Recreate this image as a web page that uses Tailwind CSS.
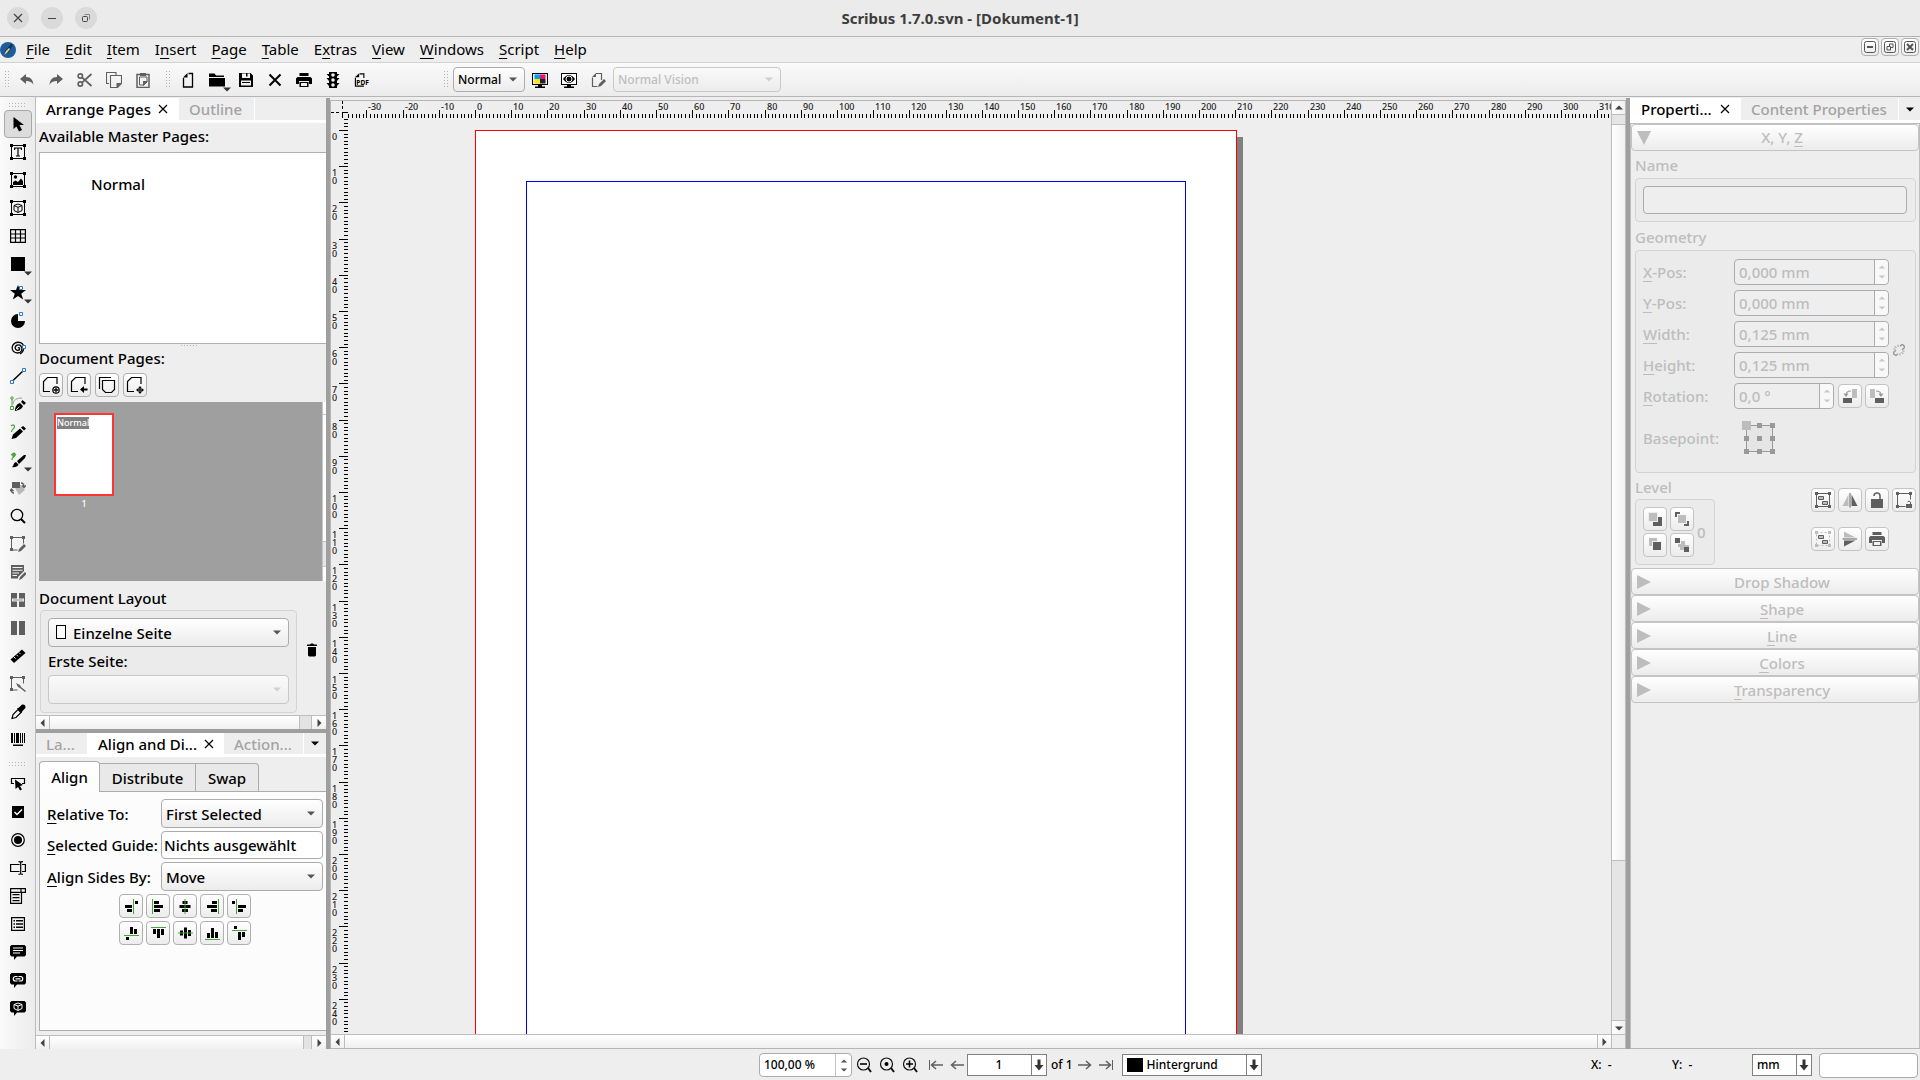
<!DOCTYPE html>
<html lang="en">
<head>
<meta charset="utf-8">
<title>Scribus 1.7.0.svn - [Dokument-1]</title>
<script src="https://cdn.jsdelivr.net/npm/@tailwindcss/browser@4"></script>
</head>
<body class="h-screen overflow-hidden bg-[#eeeeee] font-['Noto_Sans',sans-serif] text-[15px] leading-5 font-medium text-black flex flex-col">

<!-- icon sprite -->
<svg class="hidden" aria-hidden="true">
  <symbol id="caret" viewBox="0 0 8 5"><path d="M0 .5h8L4 4.500z" fill="currentColor"/></symbol>
  <symbol id="caret-up" viewBox="0 0 8 5"><path d="M0 4.500h8L4 .5z" fill="currentColor"/></symbol>
  <symbol id="arr-l" viewBox="0 0 5 8"><path d="M4.500 0v8L.5 4z" fill="currentColor"/></symbol>
  <symbol id="arr-r" viewBox="0 0 5 8"><path d="M.5 0v8L4.500 4z" fill="currentColor"/></symbol>
  <symbol id="x" viewBox="0 0 10 10"><path d="M1 1l8 8M9 1L1 9" stroke="currentColor" stroke-width="1.200" fill="none"/></symbol>
  <symbol id="grip-h" viewBox="0 0 17 5"><path d="M0 0h1v1H0zM3 0h1v1H3zM6 0h1v1H6zM9 0h1v1H9zM12 0h1v1h-1zM15 0h1v1h-1zM0 3h1v1H0zM3 3h1v1H3zM6 3h1v1H6zM9 3h1v1H9zM12 3h1v1h-1zM15 3h1v1h-1z" fill="#b4b4b4"/></symbol>
  <symbol id="grip-v" viewBox="0 0 5 17"><path d="M0 0h1v1H0zM0 3h1v1H0zM0 6h1v1H0zM0 9h1v1H0zM0 12h1v1H0zM0 15h1v1H0zM3 0h1v1H3zM3 3h1v1H3zM3 6h1v1H3zM3 9h1v1H3zM3 12h1v1H3zM3 15h1v1H3z" fill="#b4b4b4"/></symbol>
  <symbol id="down" viewBox="0 0 10 12"><path d="M3.500 0.500h3v5.500H9.500L5 11.500.5 6h3z" fill="#333"/></symbol>
  <!-- main toolbar -->
  <symbol id="undo" viewBox="0 0 16 16"><path d="M1 7l6-5v3c5 0 7 3 7.500 8C13 10 11 9 7 9v3z" fill="#5f5f5f"/></symbol>
  <symbol id="redo" viewBox="0 0 16 16"><path d="M15 7L9 2v3C4 5 2 8 1.500 13 3 10 5 9 9 9v3z" fill="#5f5f5f"/></symbol>
  <symbol id="cut" viewBox="0 0 16 16"><g fill="none" stroke="#5f5f5f" stroke-width="1.700"><circle cx="3.300" cy="4" r="2.200"/><circle cx="3.300" cy="12" r="2.200"/><path d="M5 5.300L14.500 14M5 10.700L14.500 2"/></g></symbol>
  <symbol id="copy" viewBox="0 0 16 16"><g fill="none" stroke="#5f5f5f" stroke-width="1.100"><path d="M3 11.500H.5V.5h9.500V3M4.500 3.500h11v8l-4 4h-7z"/></g><path d="M15.500 11h-5v5z" fill="#5f5f5f"/></symbol>
  <symbol id="paste" viewBox="0 0 16 16"><g fill="none" stroke="#5f5f5f" stroke-width="1.500"><path d="M2 2.500h12v13H2z"/><path d="M4.500 5v8h4.500l3-3V5z" stroke-width="1"/></g><path d="M5 1h6v3H5zM8 14l5-5H8z" fill="#5f5f5f"/></symbol>
  <symbol id="new" viewBox="0 0 16 16"><path d="M3.500 6v9h9V1.500H8.500" fill="none" stroke="#000" stroke-width="1.300"/><path d="M3 5.500L7.500 1v4.500z"/></symbol>
  <symbol id="open" viewBox="0 0 16 16"><path d="M0 1.500h5.500L7 3.500h8v1.500H0zM0 6h16v8.500H0z"/></symbol>
  <symbol id="save" viewBox="0 0 16 16"><path fill-rule="evenodd" d="M1 1h11.500L15 3.500V15H1zM4 1.500v4.500h8V1.500H9.500v3H8v-3zM3 8.500v5h10v-5zM4 10h8v1H4z"/></symbol>
  <symbol id="close" viewBox="0 0 16 16"><path d="M2.500 2.500l11 11M13.500 2.500l-11 11" stroke="#000" stroke-width="2"/></symbol>
  <symbol id="print" viewBox="0 0 16 16"><path fill="currentColor" fill-rule="evenodd" d="M3.500 1h9v3h-9zM1.500 5h13L16 6.500V12h-3V9H3v3H0V6.500zM3.500 10h9v5h-9zM5 11v3h6v-3z"/></symbol>
  <symbol id="traffic" viewBox="0 0 16 16"><path fill-rule="evenodd" d="M4 0h8v2h2.500L12 4.500V6h2.500L12 9v2h2.500L12 14v2H4v-2l-2.500-3H4V9L1.500 6H4V4.500L1.500 2H4zM8 1.200a1.800 1.800 0 100 3.600 1.800 1.800 0 000-3.600zM8 6.200a1.800 1.800 0 100 3.600 1.800 1.800 0 000-3.600zM8 11.200a1.800 1.800 0 100 3.600 1.800 1.800 0 000-3.600z"/></symbol>
  <symbol id="pdf" viewBox="0 0 17 16"><path d="M1.500 15V5.500M1.500 14.500h9M6 1.500h4.500V6" fill="none" stroke="#000" stroke-width="1.200"/><path d="M1 5L5.500.8V5z"/><text x="2.500" y="13" font-size="7" font-weight="700">PDF</text></symbol>
  <symbol id="cmyk" viewBox="0 0 16 16"><path d="M0 1h16v12H0zM3 14.500h10V16H3zM6 13h4v2H6z"/><path d="M1 2h14v10H1z" fill="#eee"/><path d="M2.500 2.500h5.500V7H2.500z" fill="#00a0f0"/><path d="M8 2.500h5.500V7H8z" fill="#e8107c"/><path d="M2.500 7H8v4.500H2.500z" fill="#ffe600"/><path d="M8 7h5.500v4.500H8z" fill="#222"/></symbol>
  <symbol id="preview" viewBox="0 0 16 16"><path d="M0 1h16v12H0zM3 14.500h10V16H3zM6 13h4v2H6z"/><path d="M1 2h14v10H1z" fill="#fff"/><path d="M2 7q6-8 12 0q-6 8-12 0z"/><circle cx="8" cy="7" r="3" fill="none" stroke="#fff"/></symbol>
  <symbol id="editdoc" viewBox="0 0 16 16"><path d="M2.500 5.500v9h5M6 1.500h5.500V8" fill="none" stroke="#5f5f5f" stroke-width="1.200"/><path d="M2 5l4-4v4zM8 15l1-3 5-5 2 2-5 5z" fill="#5f5f5f"/></symbol>
  <!-- tool box -->
  <symbol id="t-select" viewBox="0 0 16 16"><path d="M3.500 1v12l3-2.500L9 15.500l3-1.500-2.500-5H14z"/></symbol>
  <symbol id="frame" viewBox="0 0 16 16"><path d="M1.500 1.500h13v13h-13z" fill="none" stroke="currentColor"/><path d="M0 0h3v3H0zM13 0h3v3h-3zM0 13h3v3H0zM13 13h3v3h-3z" fill="currentColor"/></symbol>
  <symbol id="t-text" viewBox="0 0 16 16"><use href="#frame"/><path d="M4 3.500h8v2.500h-1L10.500 4.500H8.600v7H10v1H6v-1h1.400v-7H5.500L5 6H4z"/></symbol>
  <symbol id="t-image" viewBox="0 0 16 16"><use href="#frame"/><circle cx="5.500" cy="5" r="1.700"/><path d="M3 13V10l2.500-1.500L8 10l3-3.500L13 9v4z"/></symbol>
  <symbol id="t-render" viewBox="0 0 16 16"><use href="#frame"/><path d="M8 4l4 1.500v5L8 12.500 4 10.500v-5zM4 5.500l4 1.800 4-1.800M8 7.300v5" fill="none" stroke="#000"/></symbol>
  <symbol id="t-table" viewBox="0 0 16 16"><path d="M.6 1.600h14.800v12.800H.6zM.6 6h15M.6 10h15M5.500 2v12M10.500 2v12" fill="none" stroke="#000" stroke-width="1.200"/></symbol>
  <symbol id="t-rect" viewBox="0 0 16 16"><path d="M1 1h14v14H1z"/></symbol>
  <symbol id="t-star" viewBox="0 0 16 16"><path d="M8 1l2 5h6l-4.800 3.700 2 5.800L8 12l-5.200 3.500 2-5.800L0 6h6z"/><path d="M9.500 2.500h3v3h-3z" fill="#fff" stroke="#2a7fd0"/></symbol>
  <symbol id="t-arc" viewBox="0 0 16 16"><path d="M8 2a7 7 0 107 7H8z"/><path d="M9.500.5h3v3h-3z" fill="#fff" stroke="#2a7fd0"/></symbol>
  <symbol id="t-spiral" viewBox="0 0 16 16"><path d="M8 8c.8-.8 2 0 1.600 1.200C9 11 5.600 10.800 5.200 8.200 4.800 5.200 9 3.800 10.900 6c2.600 3.200.2 7-3.300 7C3.800 13 1.600 10 2.200 6.800 3 3 7 1.400 10.500 2.700 12 3.300 13 4.300 13.500 5.500M13.600 9c-.4 2.500-1.600 4-3.600 5" fill="none" stroke="#000" stroke-width="1.300"/><path d="M12.500 5.500h3v3h-3z" fill="#fff" stroke="#2a7fd0"/></symbol>
  <symbol id="t-line" viewBox="0 0 16 16"><path d="M3 12.500L13 3" stroke="#000" stroke-width="1.500"/><path d="M.5 12.500h3v3h-3zM12.500.5h3v3h-3z" fill="#fff" stroke="#2a7fd0"/></symbol>
  <symbol id="t-bezier" viewBox="0 0 16 16"><path d="M2 2v9" stroke="#43a735"/><path d="M.5 10.500h3v3h-3zM1 1h2v2H1z" fill="#fff" stroke="#43a735"/><path d="M3 8c0-4 4-6 9-6" stroke="#999" fill="none"/><path d="M5 15c0-4 1.500-7 5-8l3 3c-1 3-4 4-6 4.500zM11 6l1.500-2L16 7l-2 2z"/><path d="M6 14l3.500-3.500" stroke="#fff" stroke-width=".8"/></symbol>
  <symbol id="t-free" viewBox="0 0 16 16"><path d="M1 2c1-1.500 4-1 3.500 1S1.500 5 1.500 8" fill="none" stroke="#43a735" stroke-width="1.200"/><path d="M1.500 15l1.500-4.500 7-6L13 7.500 6 14zM11 3.500L13 2l3 2.500L14 6.500z"/></symbol>
  <symbol id="t-calli" viewBox="0 0 16 16"><path d="M1 3c3-4 6-1 4 1S2 6 2 8c0-2 1-3 1-4S2 3 1 3z" fill="#43a735" stroke="#43a735" stroke-width=".8"/><path d="M2 15c2-1 1-4 4-5l2.500 2.500C8 15 4 15.500 2 15zM7 9L14 3l2 0-1 3-6 6z"/></symbol>
  <symbol id="t-rotate" viewBox="0 0 16 16"><path d="M5 8l6-3 4 5-6 5z" fill="#b9b9b9"/><path d="M2 2h8v6H2z" fill="#5f5f5f"/><path d="M11 3q3 0 3 4M12 5.500l2 2 2-2M4 13q-2.500 0-2.500-3M0 11l1.500-2L3.500 11" fill="none" stroke="#5f5f5f" stroke-width="1.400"/></symbol>
  <symbol id="t-zoom" viewBox="0 0 16 16"><circle cx="7" cy="7" r="5.700" fill="none" stroke="#000" stroke-width="1.300"/><path d="M11 11l4 4" stroke="#000" stroke-width="2"/></symbol>
  <symbol id="t-edframe" viewBox="0 0 16 16"><path d="M1.500 1.500h12v6M1.500 2v12h6" fill="none" stroke="#5f5f5f"/><path d="M0 0h3v3H0zM12 0h3v3h-3zM0 12h3v3H0zM8 16l1-3 5-5 2 2-5 5z" fill="#5f5f5f"/></symbol>
  <symbol id="t-edtext" viewBox="0 0 16 16"><path fill-rule="evenodd" d="M1 1h13v6l-6 6v1.500H1zM2.500 3v1h10V3zM2.500 5.700v1h10v-1zM2.500 8.500v1H9v-1zM2.500 11v1H7v-1zM9 16l1-3 5-5 1.500 2-5 5z" fill="#5f5f5f"/></symbol>
  <symbol id="t-link" viewBox="0 0 16 16"><path d="M1 1h6v14H1zM9 1h6v14H9z" fill="#5f5f5f"/><path d="M2 6.500h12v3H2z" fill="#eee"/><path d="M3 7.500h10v1H3z" fill="#999"/></symbol>
  <symbol id="t-unlink" viewBox="0 0 16 16"><path d="M1 1h6v14H1zM9 1h6v14H9z" fill="#5f5f5f"/></symbol>
  <symbol id="t-measure" viewBox="0 0 16 16"><path d="M.5 11.500L12 1.500l3.500 3.500L4 15z"/><path d="M4 9l1.500 1.500M6.500 6.800L8 8.300M9 4.600l1.500 1.500" stroke="#eee"/></symbol>
  <symbol id="t-copyp" viewBox="0 0 16 16"><path d="M1.500 1.500h12v6M1.500 2v12h6" fill="none" stroke="#5f5f5f"/><path d="M0 0h3v3H0zM12 0h3v3h-3zM0 12h3v3H0zM6 7l4 2 1 2 5 4-1 1-5-4-2-1z" fill="#5f5f5f"/></symbol>
  <symbol id="t-eye" viewBox="0 0 16 16"><path d="M2 14.500l1-4 5-5 3 3-5 5z" fill="none" stroke="#000" stroke-width="1.200"/><path d="M7 4.500l2-1 2.500-2.500c3-1.500 5 1.500 3.500 3.500L12.500 7l-1 2z"/></symbol>
  <symbol id="t-barcode" viewBox="0 0 16 16"><path d="M1 1h2v10H1zM4 1h1v10H4zM6 1h3v10H6zM10 1h1v10h-1zM12 1h1v10h-1zM14 1h1v10h-1zM3 12.500h10V14H3z"/></symbol>
  <symbol id="t-pbutton" viewBox="0 0 16 16"><path d="M4 7.500H1.500v-5h13v5H12" fill="none" stroke="#000" stroke-width="1.200"/><path d="M5 3.500l8 5.500-3 1 2 3.500-2 1-2-3.500-2.500 2z"/></symbol>
  <symbol id="t-check" viewBox="0 0 16 16"><path d="M2 2h12v12H2z"/><path d="M4.500 8l2.500 2.500L12 5.500" fill="none" stroke="#fff" stroke-width="1.500"/></symbol>
  <symbol id="t-radio" viewBox="0 0 16 16"><circle cx="8" cy="8" r="6.300" fill="none" stroke="#000" stroke-width="1.200"/><circle cx="8" cy="8" r="4"/></symbol>
  <symbol id="t-field" viewBox="0 0 16 16"><path d="M9.500 11.500H.6v-7h9M12 4.500h3.400v7H12M10.700 2v12M8.500 1.700q2 0 2.200 1q.2-1 2.300-1M8.500 14.300q2 0 2.200-1q.2 1 2.300 1" fill="none" stroke="#000" stroke-width="1.200"/></symbol>
  <symbol id="t-combo" viewBox="0 0 16 16"><path d="M.6.6h14.800v3.800H.6zM.6 4v11.400H11.500V4M11 .6v4" fill="none" stroke="#000" stroke-width="1.200"/><path d="M2.500 6h7v1.200h-7zM2.500 9h7v1.200h-7zM2.500 12h7v1.200h-7z"/></symbol>
  <symbol id="t-list" viewBox="0 0 16 16"><path d="M1.600 1.600h12.800v12.800H1.600z" fill="none" stroke="#000" stroke-width="1.200"/><path d="M3.500 4h1.500v1.500H3.500zM6 4h7v1.500H6zM3.500 7.200h1.500v1.500H3.500zM6 7.200h7v1.500H6zM3.500 10.500h1.500V12H3.500zM6 10.500h7V12H6z"/></symbol>
  <symbol id="bubble" viewBox="0 0 16 16"><path d="M1.500 1h13L16 2.500V11l-1.500 1.500H7L4 16v-3.500H1.500L0 11V2.500z"/></symbol>
  <symbol id="t-note" viewBox="0 0 16 16"><use href="#bubble"/><path d="M3 4h10M3 6.500h10M3 9h7" stroke="#fff" stroke-width="1.200"/></symbol>
  <symbol id="t-url" viewBox="0 0 16 16"><use href="#bubble"/><path d="M7.500 4.500H5.500a2 2 0 000 4.500h2M8.500 4.500h2a2 2 0 010 4.500h-2M5.500 6.800h5" fill="none" stroke="#fff" stroke-width="1.200"/></symbol>
  <symbol id="t-3d" viewBox="0 0 16 16"><use href="#bubble"/><path d="M8 3l4 1.500v4L8 10.500 4 8.500v-4zM4 4.500l4 1.500 4-1.500M8 6v4" fill="none" stroke="#fff"/></symbol>
  <!-- pages panel -->
  <symbol id="pg" viewBox="0 0 18 18"><path d="M8 15.500H1.500v-10l4-4h9.500V8" fill="none" stroke="#000" stroke-width="1.200"/></symbol>
  <symbol id="pg-add" viewBox="0 0 18 18"><use href="#pg"/><circle cx="14" cy="14" r="3.200" fill="#fff" stroke="#000" stroke-width="1.200"/><path d="M14 11.500v5M11.500 14h5" stroke="#000" stroke-width="1.300"/></symbol>
  <symbol id="pg-imp" viewBox="0 0 18 18"><use href="#pg"/><path d="M10 13.500l4-3.500v2.500h3.500v2H14V17z"/></symbol>
  <symbol id="pg-dup" viewBox="0 0 18 18"><path d="M1.500 13V1.500H13M4.500 4.500h12v9l-3 3h-6l-3-3z" fill="none" stroke="#000" stroke-width="1.200"/></symbol>
  <symbol id="pg-move" viewBox="0 0 18 18"><use href="#pg"/><path d="M14 10l2 2.500h-4zM14 18l2-2.500h-4zM10 14l2.500-2v4zM18 14l-2.500-2v4z"/><path d="M14 11v6M11 14h6" stroke="#000"/></symbol>
  <symbol id="trash" viewBox="0 0 10 14"><path d="M0 1.500h3L4 .5h2l1 1h3V3H0zM1 4h8v8.500L8 13.500H2l-1-1z"/></symbol>
  <!-- alignment -->
  <symbol id="al-1" viewBox="0 0 16 16"><path d="M10.500 1v15" stroke="#43a735"/><path d="M12 3h3v3h-3zM2 7h7v3H2zM4 11h5v3H4z"/></symbol>
  <symbol id="al-2" viewBox="0 0 16 16"><path d="M2.500 1v15" stroke="#43a735"/><path d="M4 3h5v3H4zM4 7h9v3H4zM4 11h6v3H4z"/></symbol>
  <symbol id="al-3" viewBox="0 0 16 16"><path d="M5.500 3h5v3h-5zM2.500 7h11v3h-11zM5 11h6v3H5z"/><path d="M8 1v15" stroke="#43a735"/></symbol>
  <symbol id="al-4" viewBox="0 0 16 16"><path d="M14.500 1v15" stroke="#43a735"/><path d="M8 3h5v3H8zM3 7h10v3H3zM7 11h6v3H7z"/></symbol>
  <symbol id="al-5" viewBox="0 0 16 16"><path d="M5.500 1v15" stroke="#43a735"/><path d="M1 3h3v3H1zM7 7h8v3H7zM7 11h5v3H7z"/></symbol>
  <!-- properties -->
  <symbol id="rot-l" viewBox="0 0 16 16"><path d="M10 1h5v9h-5z" fill="#bdbdbd"/><path d="M1 10h9v5H1z" fill="#5f5f5f"/><path d="M9 3q-5 0-5 4M2 5.500l2 2.500 2-2.500" fill="none" stroke="#999" stroke-width="1.200"/></symbol>
  <symbol id="p-group" viewBox="0 0 16 16"><use href="#frame"/><path d="M3.500 4.500h5v3h-5zM7.500 9.500h5v3h-5z" fill="#bdbdbd" stroke="#5f5f5f"/></symbol>
  <symbol id="p-ungroup" viewBox="0 0 16 16"><path d="M1.500 1.500h13v13h-13z" fill="none" stroke="#bdbdbd" stroke-dasharray="2 2"/><path d="M0 0h3v3H0zM13 0h3v3h-3zM0 13h3v3H0zM13 13h3v3h-3z" fill="#bdbdbd"/><path d="M3.500 4.500h5v3h-5zM7.500 9.500h5v3h-5z" fill="#bdbdbd" stroke="#5f5f5f"/></symbol>
  <symbol id="p-fliph" viewBox="0 0 16 16"><path d="M6.500 2.500V14H.5z" fill="#bdbdbd"/><path d="M9.500 2.500V14h6z" fill="#5f5f5f"/><path d="M8 1v14.500" stroke="#5f5f5f"/></symbol>
  <symbol id="p-lock" viewBox="0 0 16 16"><path d="M2 7h12v9H2z" fill="#5f5f5f"/><path d="M5 4q0-3 3-3t3 3v3" fill="none" stroke="#5f5f5f" stroke-width="1.500"/></symbol>
  <symbol id="p-locksize" viewBox="0 0 16 16"><path d="M1.500 1.500h13v6M1.500 2v12.500h8" fill="none" stroke="#5f5f5f"/><path d="M0 0h3v3H0zM13 0h3v3h-3zM0 13h3v3H0zM10 12h6v4h-6z" fill="#5f5f5f"/><path d="M11.500 10q1.500-2 3 0v2" fill="none" stroke="#5f5f5f"/></symbol>
  <symbol id="lv-1" viewBox="0 0 16 16"><path d="M6 6h9v9H6z" fill="#5f5f5f"/><path d="M1 1h10v10H1z" fill="#eee"/><path d="M2 2h8v8H2z" fill="#bdbdbd"/></symbol>
  <symbol id="lv-2" viewBox="0 0 16 16"><path d="M1 1h5v2H3v3H1zM15 15h-5v-2h3v-3h2z" fill="#5f5f5f"/><path d="M4 4h8v8H4z" fill="#bdbdbd"/></symbol>
  <symbol id="lv-3" viewBox="0 0 16 16"><path d="M2 1h8v8H2z" fill="#bdbdbd"/><path d="M5 4h10v10H5z" fill="#eee"/><path d="M6 5h8v8H6z" fill="#5f5f5f"/></symbol>
  <symbol id="lv-4" viewBox="0 0 16 16"><path d="M1 1h5v5H1zM10 10h5v5h-5z" fill="#5f5f5f"/><path d="M7 4h4v4h4v2h-5v3H6v-3H4V7h3z" fill="#bdbdbd"/></symbol>
  <symbol id="unchain" viewBox="0 0 12 12"><g fill="none" stroke="#999" stroke-width="1.400"><path d="M4.800 9.800l-.6.700a2 2 0 01-3-2.800L3 6.200"/><path d="M7.200 2.200l.6-.7a2 2 0 013 2.800L9 5.800"/></g><path d="M1.500 2l2 2M5 .8v2M.5 5H2.500M10.500 10l-2-2M7 11.200v-2M11.500 7H9.500" fill="none" stroke="#999"/></symbol>
  <!-- status bar -->
  <symbol id="lens" viewBox="0 0 16 16"><circle cx="7.500" cy="7" r="6" fill="none" stroke="#111" stroke-width="1.200"/><path d="M12 11l3 4" stroke="#111" stroke-width="2"/></symbol>
  <symbol id="z-out" viewBox="0 0 16 16"><use href="#lens"/><path d="M4 7h7" stroke="#000" stroke-width="1.600"/></symbol>
  <symbol id="z-1" viewBox="0 0 16 16"><use href="#lens"/><circle cx="7.500" cy="7" r="2"/></symbol>
  <symbol id="z-in" viewBox="0 0 16 16"><use href="#lens"/><path d="M4 7h7M7.500 3.500v7" stroke="#000" stroke-width="1.600"/></symbol>
  <symbol id="go" viewBox="0 0 16 16"><path d="M1 8h12M9 4l4.500 4L9 12" fill="none" stroke="#5f5f5f" stroke-width="1.500"/></symbol>
  <symbol id="go-end" viewBox="0 0 16 16"><path d="M1 8h11M8 4l4.500 4L8 12" fill="none" stroke="#5f5f5f" stroke-width="1.500"/><path d="M14.500 3v10" stroke="#5f5f5f"/></symbol>
</svg>

<!-- window title -->
<header class="relative flex h-[37px] shrink-0 items-center justify-center border-b border-[#b5b5b5] bg-[#ebebeb]">
  <div class="absolute inset-y-0 left-[7px] flex items-center gap-3">
    <button aria-label="Close window" class="grid size-[22px] place-items-center rounded-full bg-[#dadada] text-[#444]"><svg class="size-2.5"><use href="#x"/></svg></button>
    <button aria-label="Minimize window" class="grid size-[22px] place-items-center rounded-full bg-[#dadada]"><span class="h-px w-2 bg-[#444]"></span></button>
    <button aria-label="Restore window" class="grid size-[22px] place-items-center rounded-full bg-[#dadada]"><svg class="size-2.5" viewBox="0 0 10 10" fill="none" stroke="#444"><rect x="1.500" y="3.500" width="5" height="5" rx="1"/><path d="M3.500 1.500h5v5" stroke="#888"/></svg></button>
  </div>
  <h1 class="text-[15px] font-bold text-[#3d3d3d]">Scribus 1.7.0.svn - [Dokument-1]</h1>
</header>

<!-- menu bar -->
<nav class="flex h-[26px] shrink-0 items-center border-b border-[#d3d3d3] pr-px">
  <svg class="mr-[10px] size-4" viewBox="0 0 16 16"><circle cx="8" cy="8" r="8" fill="#1c5d9e"/><path d="M4 13l1-4 6-7 2 1-5 8z" fill="#16304d"/><path d="M4 13l2-4 3-3 1 1-3 4z" fill="#e8cf8a"/></svg>
  <ul class="flex grow gap-[15px] pb-0.5 font-normal underline-offset-3">
    <li><a href="#"><u>F</u>ile</a></li><li><a href="#"><u>E</u>dit</a></li><li><a href="#"><u>I</u>tem</a></li><li><a href="#">I<u>n</u>sert</a></li><li><a href="#"><u>P</u>age</a></li><li><a href="#"><u>T</u>able</a></li><li><a href="#">E<u>x</u>tras</a></li><li><a href="#"><u>V</u>iew</a></li><li><a href="#"><u>W</u>indows</a></li><li><a href="#"><u>S</u>cript</a></li><li><a href="#"><u>H</u>elp</a></li>
  </ul>
  <div class="mb-1.5 flex gap-0.5">
    <button aria-label="Minimize document" class="grid size-[18px] place-items-center rounded-sm border border-[#b0b0b0] bg-gradient-to-b from-white to-[#ececec]"><svg class="size-3" viewBox="0 0 12 12" fill="none" stroke="#555"><rect x=".5" y=".5" width="11" height="11" rx="2"/><path d="M3 6h6" stroke-width="2"/></svg></button>
    <button aria-label="Restore document" class="grid size-[18px] place-items-center rounded-sm border border-[#b0b0b0] bg-gradient-to-b from-white to-[#ececec]"><svg class="size-3" viewBox="0 0 12 12" fill="none" stroke="#555"><rect x=".5" y=".5" width="11" height="11" rx="2"/><path d="M3 5.500h3.500V9H3zM5.500 5V3H9v3.500H7"/></svg></button>
    <button aria-label="Close document" class="grid size-[18px] place-items-center rounded-sm border border-[#b0b0b0] bg-gradient-to-b from-white to-[#ececec]"><svg class="size-3" viewBox="0 0 12 12" fill="none" stroke="#555"><rect x=".5" y=".5" width="11" height="11" rx="2"/><path d="M3 3l6 6M9 3L3 9" stroke-width="2"/></svg></button>
  </div>
</nav>

<!-- toolbar -->
<div role="toolbar" aria-label="Main" class="flex h-[34px] shrink-0 items-center border-b border-[#b5b5b5] bg-gradient-to-b from-[#fafafa] to-[#ececec] pl-[5px] text-xs">
  <svg class="mr-[9px] h-[17px] w-[5px]"><use href="#grip-v"/></svg>
  <div class="flex gap-[13px]">
    <button aria-label="Undo"><svg class="size-4"><use href="#undo"/></svg></button>
    <button aria-label="Redo"><svg class="size-4"><use href="#redo"/></svg></button>
    <button aria-label="Cut"><svg class="size-4"><use href="#cut"/></svg></button>
    <button aria-label="Copy"><svg class="size-4"><use href="#copy"/></svg></button>
    <button aria-label="Paste"><svg class="size-4"><use href="#paste"/></svg></button>
  </div>
  <svg class="mr-[9px] ml-[15px] h-[17px] w-[5px]"><use href="#grip-v"/></svg>
  <div class="flex gap-[13px]">
    <button aria-label="New"><svg class="size-4"><use href="#new"/></svg></button>
    <button aria-label="Open" class="relative"><svg class="size-4"><use href="#open"/></svg><svg class="absolute -right-1.5 -bottom-1 h-[5px] w-2 text-[#333]"><use href="#caret"/></svg></button>
    <button aria-label="Save"><svg class="size-4"><use href="#save"/></svg></button>
    <button aria-label="Close"><svg class="size-4"><use href="#close"/></svg></button>
    <button aria-label="Print"><svg class="size-4"><use href="#print"/></svg></button>
    <button aria-label="Preflight Verifier"><svg class="size-4"><use href="#traffic"/></svg></button>
    <button aria-label="Save as PDF"><svg class="size-4"><use href="#pdf"/></svg></button>
  </div>
  <svg class="mr-1 ml-[74px] h-[17px] w-[5px]"><use href="#grip-v"/></svg>
  <div class="relative">
    <select aria-label="Image quality" class="h-[25px] w-[72px] appearance-none rounded-sm border border-[#acacac] bg-gradient-to-b from-white to-[#ececec] pl-1"><option>Normal</option></select>
    <svg class="pointer-events-none absolute top-2.5 right-2 h-[5px] w-2 text-[#555]"><use href="#caret"/></svg>
  </div>
  <div class="mx-[7px] flex gap-[13px]">
    <button aria-label="Color management"><svg class="size-4"><use href="#cmyk"/></svg></button>
    <button aria-label="Preview mode"><svg class="size-4"><use href="#preview"/></svg></button>
    <button aria-label="Edit in preview"><svg class="size-4"><use href="#editdoc"/></svg></button>
  </div>
  <div class="relative">
    <select aria-label="Vision" disabled class="h-[25px] w-[168px] appearance-none rounded-sm border border-[#c8c8c8] bg-gradient-to-b from-[#fafafa] to-[#ececec] pl-1 text-[#bebebe] opacity-100"><option>Normal Vision</option></select>
    <svg class="pointer-events-none absolute top-2.5 right-2 h-[5px] w-2 text-[#cfcfcf]"><use href="#caret"/></svg>
  </div>
</div>

<main class="flex min-h-0 flex-1">
  <!-- tool box -->
  <div id="tools" role="toolbar" aria-label="Tools" class="flex w-9 shrink-0 flex-col items-center border-r border-[#bdbdbd] bg-gradient-to-r from-[#fafafa] to-[#ececec]"></div>

  <!-- left docks -->
  <aside class="flex w-[290px] shrink-0 flex-col overflow-hidden pt-px">
    <div role="tablist" class="flex h-[25px] shrink-0 border-b-3 border-white">
      <div role="tab" aria-selected="true" class="-mb-0.5 flex w-[143px] items-center justify-between bg-white pr-[11px] pb-0.5 pl-2.5">Arrange Pages<button aria-label="Close tab"><svg class="size-2.5"><use href="#x"/></svg></button></div>
      <div role="tab" class="flex w-[76px] items-center border-r border-white pl-2.5 text-[#a3a3a3]">Outline</div>
    </div>
    <div class="flex flex-col pl-[3px]">
      <h2 class="mt-[3px] h-[26px]">Available Master Pages:</h2>
      <div class="h-48 w-[290px] border border-[#b0b0b0] bg-white pt-[21px] pl-[51px]">Normal</div>
      <svg class="mt-px ml-[142px] h-0.5 w-[17px]" viewBox="0 0 17 2"><path d="M0 0h1v1H0zM3 0h1v1H3zM6 0h1v1H6zM9 0h1v1H9zM12 0h1v1h-1zM15 0h1v1h-1z" fill="#b4b4b4"/></svg>
      <h2 class="mt-px h-[23px]">Document Pages:</h2>
      <div class="mt-0.5 flex gap-1 pb-[5px]">
        <button aria-label="Insert page" class="grid size-6 place-items-center rounded-sm border border-[#b0b0b0] bg-gradient-to-b from-white to-[#ececec]"><svg class="size-[18px]"><use href="#pg-add"/></svg></button>
        <button aria-label="Import page" class="grid size-6 place-items-center rounded-sm border border-[#b0b0b0] bg-gradient-to-b from-white to-[#ececec]"><svg class="size-[18px]"><use href="#pg-imp"/></svg></button>
        <button aria-label="Duplicate page" class="grid size-6 place-items-center rounded-sm border border-[#b0b0b0] bg-gradient-to-b from-white to-[#ececec]"><svg class="size-[18px]"><use href="#pg-dup"/></svg></button>
        <button aria-label="Move page" class="grid size-6 place-items-center rounded-sm border border-[#b0b0b0] bg-gradient-to-b from-white to-[#ececec]"><svg class="size-[18px]"><use href="#pg-move"/></svg></button>
      </div>
      <div class="flex h-[179px]">
        <div class="w-[283px] bg-[#9f9f9f] pt-[11px] pl-[15px] text-[9px]">
          <div class="h-[83px] w-[60px] border-2 border-[#ff3535] bg-white pt-0.5 pl-px"><span class="block w-max bg-[#808080] leading-3 text-white">Normal</span></div>
          <div class="w-[60px] text-center leading-4 text-white">1</div>
        </div>
        <div class="flex w-1 flex-col border-l border-[#c5c5c5] bg-white"><div class="h-[13px] border-b border-[#c5c5c5]"></div><div class="mt-[126px] h-[26px] border-y border-[#c5c5c5] bg-[#e6e6e6]"></div></div>
      </div>
      <h2 class="mt-[7px] h-[22px]">Document Layout</h2>
      <div class="flex items-center gap-2.5">
        <div class="ml-px flex h-[103px] w-[257px] flex-col rounded-sm border border-[#d3d3d3] bg-[#ebebeb] px-[7px] pt-[7px]">
          <div class="relative">
            <select aria-label="Document layout" class="h-[29px] w-full appearance-none rounded-sm border border-[#acacac] bg-gradient-to-b from-white to-[#ececec] pl-6"><option>Einzelne Seite</option></select>
            <span class="pointer-events-none absolute top-[7px] left-2 h-3.5 w-2.5 border border-black bg-white"></span>
            <svg class="pointer-events-none absolute top-3 right-2 h-[5px] w-2 text-[#555]"><use href="#caret"/></svg>
          </div>
          <label for="first" class="mt-1 h-6">Erste Seite:</label>
          <div class="relative">
            <select id="first" disabled class="h-[29px] w-full appearance-none rounded-sm border border-[#c8c8c8] bg-gradient-to-b from-[#fafafa] to-[#ececec] opacity-100"><option></option></select>
            <svg class="pointer-events-none absolute top-3 right-2 h-[5px] w-2 text-[#cfcfcf]"><use href="#caret"/></svg>
          </div>
        </div>
        <button aria-label="Delete page" class="-mt-6"><svg class="h-3.5 w-2.5"><use href="#trash"/></svg></button>
      </div>
    </div>
    <div class="mt-0.5 flex h-[14px] shrink-0 border-t border-[#bdbdbd] bg-gradient-to-b from-white to-[#f0f0f0] text-[#444]">
      <div class="grid w-3.5 place-items-center border-r border-[#bdbdbd]"><svg class="h-2 w-[5px]"><use href="#arr-l"/></svg></div>
      <div class="grow"></div><div class="w-[13px] border-x border-[#bdbdbd] bg-[#e3e3e3]"></div>
      <div class="grid w-3.5 place-items-center"><svg class="h-2 w-[5px]"><use href="#arr-r"/></svg></div>
    </div>
    <div class="h-1 shrink-0 bg-[#9f9f9f]"></div>

    <div role="tablist" class="flex h-6 shrink-0 border-b-3 border-white text-[#a3a3a3]">
      <div role="tab" class="flex w-[51px] items-center pl-2.5">La...</div>
      <div role="tab" aria-selected="true" class="-mb-0.5 flex w-[137px] items-center justify-between bg-white pr-2.5 pb-0.5 pl-[11px] whitespace-nowrap text-black">Align and Di...<button aria-label="Close tab"><svg class="size-2.5"><use href="#x"/></svg></button></div>
      <div role="tab" class="flex w-20 items-center border-r border-white pl-2.5">Action...</div>
      <button aria-label="More tabs" class="grid grow place-items-center text-black"><svg class="h-[5px] w-2"><use href="#caret"/></svg></button>
    </div>
    <div class="flex min-h-0 grow flex-col pt-1 pb-1 pl-[3px]">
      <div role="tablist" class="flex h-[30px] shrink-0 items-end">
        <button role="tab" aria-selected="true" class="z-10 -mb-px h-[31px] w-[61px] rounded-t-sm border border-b-0 border-[#acacac] bg-gradient-to-b from-white to-[#fcfcfc]">Align</button>
        <button role="tab" class="h-7 w-24 border-t border-r border-[#acacac] bg-[#e9e9e9]">Distribute</button>
        <button role="tab" class="h-7 w-[63px] rounded-tr-sm border-t border-r border-[#acacac] bg-[#e9e9e9]">Swap</button>
      </div>
      <div class="w-[290px] grow border border-[#acacac] bg-[#fcfcfc] pt-[7px] pl-[7px] underline-offset-3">
        <form class="grid w-[276px] grid-cols-[114px_162px] items-center gap-y-[3px]">
          <label for="rel"><u>R</u>elative To:</label>
          <div class="relative"><select id="rel" class="h-[29px] w-full appearance-none rounded-sm border border-[#acacac] bg-gradient-to-b from-white to-[#ececec] pl-1"><option>First Selected</option></select><svg class="pointer-events-none absolute top-3 right-2 h-[5px] w-2 text-[#555]"><use href="#caret"/></svg></div>
          <label for="guide" class="whitespace-nowrap"><u>S</u>elected Guide:</label>
          <input id="guide" value="Nichts ausgewählt" class="h-7 w-full rounded-sm border border-[#acacac] bg-white pl-0.5">
          <label for="sides"><u>A</u>lign Sides By:</label>
          <div class="relative"><select id="sides" class="h-[29px] w-full appearance-none rounded-sm border border-[#acacac] bg-gradient-to-b from-white to-[#ececec] pl-1"><option>Move</option></select><svg class="pointer-events-none absolute top-3 right-2 h-[5px] w-2 text-[#555]"><use href="#caret"/></svg></div>
        </form>
        <div id="align" class="mt-[3px] ml-[72px] grid w-max grid-cols-5 gap-[3px]"></div>
      </div>
    </div>
    <div class="flex h-[14px] shrink-0 border-t border-[#bdbdbd] bg-gradient-to-b from-white to-[#f0f0f0] text-[#444]">
      <div class="grid w-3.5 place-items-center border-r border-[#bdbdbd]"><svg class="h-2 w-[5px]"><use href="#arr-l"/></svg></div>
      <div class="grow"></div><div class="w-[9px] border-x border-[#bdbdbd] bg-[#e3e3e3]"></div>
      <div class="grid w-3.5 place-items-center"><svg class="h-2 w-[5px]"><use href="#arr-r"/></svg></div>
    </div>
  </aside>

  <div class="mt-px w-1 shrink-0 bg-[#9f9f9f]"></div>

  <!-- document view -->
  <section class="mt-[3px] flex min-w-0 flex-1 flex-col border-t border-b border-l border-[#b5b5b5]">
    <div class="flex min-h-0 flex-1">
      <div class="flex min-w-0 flex-1 flex-col">
        <div class="flex h-[17px] shrink-0">
          <svg class="size-[17px] shrink-0" viewBox="0 0 17 17" stroke="#000" shape-rendering="crispEdges"><path d="M11.500 0v10M0 11.500h10" stroke-dasharray="3 2"/><path d="M11.500 11v6M11 11.500h6"/></svg>
          <svg id="hruler" class="h-[17px] min-w-0 flex-1 text-[9px] text-[#222]" shape-rendering="crispEdges"></svg>
        </div>
        <div class="flex min-h-0 flex-1">
          <svg id="vruler" class="h-full w-[17px] shrink-0 text-[9px] text-[#222]" shape-rendering="crispEdges"></svg>
          <div class="relative min-w-0 flex-1 overflow-hidden">
            <div class="absolute top-[19px] left-[133px] h-[1077px] w-[762px] bg-[#808080]"></div>
            <div class="absolute top-3 left-[127px] h-[1077px] w-[762px] border border-[#f00] bg-white p-[50px]"><div class="h-full border border-[#0000e6]"></div></div>
          </div>
        </div>
      </div>
      <div class="-mb-px flex w-[15px] shrink-0 flex-col border-x border-[#bdbdbd] bg-gradient-to-r from-white to-[#f0f0f0] text-[#444]">
        <div class="grid h-3.5 place-items-center border-b border-[#bdbdbd]"><svg class="h-[5px] w-2"><use href="#caret-up"/></svg></div>
        <div class="h-2.5 border-b border-[#bdbdbd] bg-[#e5e5e5]"></div>
        <div class="grow-[735]"></div>
        <div class="grow-[159] border-y border-[#bdbdbd] bg-[#e5e5e5]"></div>
        <div class="grid h-3.5 place-items-center"><svg class="h-[5px] w-2"><use href="#caret"/></svg></div>
      </div>
    </div>
    <div class="flex h-3.5 shrink-0 border-t border-[#bdbdbd] bg-gradient-to-b from-white to-[#f0f0f0] text-[#444]">
      <div class="grid w-3.5 place-items-center border-r border-[#bdbdbd]"><svg class="h-2 w-[5px]"><use href="#arr-l"/></svg></div>
      <div class="grow"></div>
      <div class="grid w-3.5 place-items-center border-l border-[#bdbdbd]"><svg class="h-2 w-[5px]"><use href="#arr-r"/></svg></div>
      <div class="w-[15px] border-x border-[#bdbdbd] bg-[#eee]"></div>
    </div>
  </section>

  <div class="mt-px w-1 shrink-0 bg-[#9f9f9f]"></div>

  <!-- properties dock -->
  <aside class="flex w-[290px] shrink-0 flex-col overflow-hidden border-b border-[#b5b5b5] pt-px text-[#bdbdbd]">
    <div role="tablist" class="flex h-[25px] shrink-0 border-b-3 border-white text-[#a3a3a3]">
      <div role="tab" aria-selected="true" class="-mb-0.5 flex w-[111px] items-center justify-between bg-white pr-[11px] pb-0.5 pl-[11px] text-black">Properti...<button aria-label="Close tab"><svg class="size-2.5"><use href="#x"/></svg></button></div>
      <div role="tab" class="flex w-[158px] items-center border-r border-white pl-2.5 whitespace-nowrap">Content Properties</div>
      <button aria-label="More tabs" class="grid grow place-items-center text-black"><svg class="h-[5px] w-2"><use href="#caret"/></svg></button>
    </div>
    <div class="grow border-x border-t border-[#bdbdbd] underline-offset-3">
      <button class="relative block h-[27px] w-full rounded-sm border border-[#c4c4c4] bg-gradient-to-b from-white to-[#ececec] pb-0.5 pl-3.5"><svg class="absolute top-1.5 left-[5px] size-3.5" viewBox="0 0 14 14"><path d="M0 0h14L7 14z" fill="#bdbdbd"/></svg>X, Y, <u>Z</u></button>
      <div class="pr-[3px] pl-[4px]">
        <label for="name" class="mt-1 block h-[23px]">Name</label>
        <div class="rounded-sm border border-[#d3d3d3] bg-[#ebebeb] py-[7px] pr-2 pl-[7px]"><input id="name" disabled class="block h-7 w-full rounded-sm border border-[#acacac] bg-[#eee]"></div>
        <h2 class="mt-[5px] h-[23px]">Geometry</h2>
        <fieldset class="flex h-[223px] flex-col gap-[5px] rounded-sm border border-[#d3d3d3] bg-[#ebebeb] pt-2 pl-[7px]">
          <div class="relative flex h-[119px] flex-col gap-[5px]">
            <div class="flex items-center"><label for="xp" class="w-[91px]"><u>X</u>-Pos:</label><div class="spin flex h-[26px] w-[155px] rounded-sm border border-[#acacac] bg-[#eee]"><input id="xp" disabled value="0,000 mm" class="min-w-0 grow pl-1"></div></div>
            <div class="flex items-center"><label for="yp" class="w-[91px]"><u>Y</u>-Pos:</label><div class="spin flex h-[26px] w-[155px] rounded-sm border border-[#acacac] bg-[#eee]"><input id="yp" disabled value="0,000 mm" class="min-w-0 grow pl-1"></div></div>
            <div class="flex items-center"><label for="wd" class="w-[91px]"><u>W</u>idth:</label><div class="spin flex h-[26px] w-[155px] rounded-sm border border-[#acacac] bg-[#eee]"><input id="wd" disabled value="0,125 mm" class="min-w-0 grow pl-1"></div></div>
            <div class="flex items-center"><label for="ht" class="w-[91px]"><u>H</u>eight:</label><div class="spin flex h-[26px] w-[155px] rounded-sm border border-[#acacac] bg-[#eee]"><input id="ht" disabled value="0,125 mm" class="min-w-0 grow pl-1"></div></div>
            <svg class="absolute right-2.5 bottom-[22px] size-3"><use href="#unchain"/></svg>
          </div>
          <div class="flex items-center"><label for="ro" class="w-[91px]"><u>R</u>otation:</label><div class="spin mr-1 flex h-[26px] w-[100px] rounded-sm border border-[#acacac] bg-[#eee]"><input id="ro" disabled value="0,0 °" class="min-w-0 grow pl-1"></div>
            <button aria-label="Rotate left" class="mr-[3px] grid size-6 place-items-center rounded-sm border border-[#c4c4c4] bg-gradient-to-b from-white to-[#ececec]"><svg class="size-4"><use href="#rot-l"/></svg></button>
            <button aria-label="Rotate right" class="grid size-6 place-items-center rounded-sm border border-[#c4c4c4] bg-gradient-to-b from-white to-[#ececec]"><svg class="size-4 -scale-x-100"><use href="#rot-l"/></svg></button>
          </div>
          <div class="mt-1.5 flex items-center"><span class="w-[98px]">Basepoint:</span>
            <svg class="size-9" viewBox="0 0 36 36" shape-rendering="crispEdges"><path d="M5.500 5.500h26v26h-26z" fill="#e5e5e5" stroke="#999"/><path d="M16 3h5v5h-5zM29 3h5v5h-5zM3 16h5v5H3zM16 16h5v5h-5zM29 16h5v5h-5zM3 29h5v5H3zM16 29h5v5h-5zM29 29h5v5h-5z" fill="#999"/><path d="M1 1h9v9H1z" fill="#bdbdbd"/></svg>
          </div>
        </fieldset>
        <div class="flex items-start justify-between">
          <div>
            <h2 class="mt-1 h-[22px]">Level</h2>
            <div class="flex h-[66px] w-20 items-center rounded-sm border border-[#d3d3d3] bg-[#ebebeb] pl-[7px]">
              <div id="level" class="mr-[3px] grid grid-cols-2 gap-x-[3px] gap-y-0.5"></div>0
            </div>
          </div>
          <div id="ops" class="mt-[15px] grid grid-cols-4 gap-x-[3px] gap-y-[15px]"></div>
        </div>
      </div>
      <div id="acc" class="mt-[3px]">
        <button class="relative block h-[27px] w-full rounded-sm border border-[#c4c4c4] bg-gradient-to-b from-white to-[#ececec] pl-3.5">Drop Shadow</button>
        <button class="relative block h-[27px] w-full rounded-sm border border-[#c4c4c4] bg-gradient-to-b from-white to-[#ececec] pl-3.5"><u>S</u>hape</button>
        <button class="relative block h-[27px] w-full rounded-sm border border-[#c4c4c4] bg-gradient-to-b from-white to-[#ececec] pl-3.5"><u>L</u>ine</button>
        <button class="relative block h-[27px] w-full rounded-sm border border-[#c4c4c4] bg-gradient-to-b from-white to-[#ececec] pl-3.5"><u>C</u>olors</button>
        <button class="relative block h-[27px] w-full rounded-sm border border-[#c4c4c4] bg-gradient-to-b from-white to-[#ececec] pl-3.5"><u>T</u>ransparency</button>
      </div>
    </div>
  </aside>
</main>

<!-- status bar -->
<footer class="flex h-[31px] shrink-0 items-center pt-px pr-0.5 text-xs">
  <div class="w-[759px] shrink"></div>
  <div class="flex h-6 w-[93px] shrink-0 rounded-sm border border-[#acacac] bg-white"><input aria-label="Zoom" value="100,00 %" class="min-w-0 grow pl-1"><span class="flex w-4 shrink-0 flex-col items-center justify-center gap-[5px] border-l border-[#c5c5c5] text-[#555]"><svg class="h-1 w-2"><use href="#caret-up"/></svg><svg class="h-1 w-2"><use href="#caret"/></svg></span></div>
  <div class="ml-1 flex shrink-0 gap-[7px]">
    <button aria-label="Zoom out"><svg class="size-4"><use href="#z-out"/></svg></button>
    <button aria-label="Zoom to 100%"><svg class="size-4"><use href="#z-1"/></svg></button>
    <button aria-label="Zoom in"><svg class="size-4"><use href="#z-in"/></svg></button>
  </div>
  <div class="mr-0.5 ml-2.5 flex shrink-0 gap-[5px]">
    <button aria-label="First page"><svg class="size-4 -scale-x-100"><use href="#go-end"/></svg></button>
    <button aria-label="Previous page"><svg class="size-4 -scale-x-100"><use href="#go"/></svg></button>
  </div>
  <div class="relative shrink-0"><select aria-label="Page" class="h-[22px] w-20 appearance-none border border-[#808080] bg-white pr-4 text-center"><option>1</option></select><span class="pointer-events-none absolute inset-y-px right-px grid w-[15px] place-items-center border-l border-[#808080]"><svg class="h-3 w-2.5"><use href="#down"/></svg></span></div>
  <span class="ml-1 shrink-0">of 1</span>
  <div class="mr-2 ml-1 flex shrink-0 gap-[5px]">
    <button aria-label="Next page"><svg class="size-4"><use href="#go"/></svg></button>
    <button aria-label="Last page"><svg class="size-4"><use href="#go-end"/></svg></button>
  </div>
  <div class="relative shrink-0"><select aria-label="Layer" class="h-[22px] w-[140px] appearance-none border border-[#808080] bg-white pl-6"><option>Hintergrund</option></select><span class="pointer-events-none absolute top-1 left-[5px] h-3.5 w-4 bg-black"></span><span class="pointer-events-none absolute inset-y-px right-px grid w-[15px] place-items-center border-l border-[#808080]"><svg class="h-3 w-2.5"><use href="#down"/></svg></span></div>
  <div class="grow"></div>
  <span class="w-[81px]">X:&nbsp; -</span><span class="w-20">Y:&nbsp; -</span>
  <div class="relative mr-[7px]"><select aria-label="Unit" class="h-[22px] w-[60px] appearance-none border border-[#808080] bg-white pl-1"><option>mm</option></select><span class="pointer-events-none absolute inset-y-px right-px grid w-[15px] place-items-center border-l border-[#808080]"><svg class="h-3 w-2.5"><use href="#down"/></svg></span></div>
  <div role="progressbar" aria-label="Progress" class="h-[25px] w-[99px] rounded-sm border border-[#acacac] bg-white"></div>
</footer>

<script>
const icon = (id, cls = 'size-4') => `<svg class="${cls}"><use href="#${id}"/></svg>`;
const grip = '<svg class="h-[5px] w-[17px]"><use href="#grip-h"/></svg>';

/* tool box */
const toolBtn = ([id, label, menu]) => `<button aria-label="${label}" class="relative grid h-7 w-[28px] place-items-center ${id === 't-select' ? 'rounded-sm border border-[#a8a8a8] bg-[#dcdcdc]' : ''}">${icon(id)}${menu ? '<svg class="absolute right-0 bottom-0.5 h-[5px] w-2 text-[#333]"><use href="#caret"/></svg>' : ''}</button>`;
const main = [['t-select','Select'],['t-text','Text frame'],['t-image','Image frame'],['t-render','Render frame'],['t-table','Table'],['t-rect','Shape',1],['t-star','Polygon',1],['t-arc','Arc'],['t-spiral','Spiral'],['t-line','Line'],['t-bezier','Bezier curve'],['t-free','Freehand line'],['t-calli','Calligraphic line',1],['t-rotate','Rotate'],['t-zoom','Zoom'],['t-edframe','Edit contents'],['t-edtext','Story editor'],['t-link','Link frames'],['t-unlink','Unlink frames'],['t-measure','Measure'],['t-copyp','Copy properties'],['t-eye','Eye dropper'],['t-barcode','Barcode']];
const pdf = [['t-pbutton','Push button'],['t-check','Check box'],['t-radio','Radio button'],['t-field','Text field'],['t-combo','Combo box'],['t-list','List box'],['t-note','Text annotation'],['t-url','Link annotation'],['t-3d','3D annotation']];
document.getElementById('tools').innerHTML = `<div class="flex h-[13px] items-center pt-1">${grip}</div>` + main.map(toolBtn).join('') + `<div class="flex h-4 items-center pt-1">${grip}</div>` + pdf.map(toolBtn).join('');

/* button grids */
const btn = (inner, border) => `<button class="grid size-6 place-items-center rounded-sm border ${border} bg-gradient-to-b from-white to-[#ececec] text-[#5f5f5f]">${inner}</button>`;
const sides = [1, 2, 3, 4, 5];
document.getElementById('align').innerHTML =
  sides.map(n => btn(icon('al-' + n, 'size-4 text-black'), 'border-[#b0b0b0]')).join('') +
  sides.map(n => btn(icon('al-' + n, 'size-4 rotate-90 -scale-y-100'), 'border-[#b0b0b0]')).join('');
document.getElementById('level').innerHTML = [1,2,3,4].map(n => btn(icon('lv-' + n), 'border-[#c4c4c4]')).join('');
document.getElementById('ops').innerHTML =
  ['p-group','p-fliph','p-lock','p-locksize','p-ungroup'].map(n => btn(icon(n), 'border-[#c4c4c4]')).join('') +
  btn(icon('p-fliph', 'size-4 rotate-90'), 'border-[#c4c4c4]') + btn(icon('print'), 'border-[#c4c4c4]');
document.querySelectorAll('#acc button').forEach(b => b.insertAdjacentHTML('afterbegin', '<svg class="absolute top-1.5 left-[5px] size-3.5" viewBox="0 0 14 14"><path d="M0 0v14L14 7z" fill="#bdbdbd"/></svg>'));
document.querySelectorAll('.spin').forEach(s => s.insertAdjacentHTML('beforeend', '<span class="flex w-3.5 shrink-0 flex-col items-center justify-center gap-1.5 rounded-r-sm border-l border-[#acacac] bg-[#f8f8f8] text-[#c8c8c8]"><svg class="h-1 w-2"><use href="#caret-up"/></svg><svg class="h-1 w-2"><use href="#caret"/></svg></span>'));

/* rulers, in millimetres; the docks and bars around the view have fixed sizes */
const MM = 3.62, H0 = 127, V0 = 12;
function drawRulers() {
  let h = '', v = '';
  const w = innerWidth - 657, t = innerHeight - 164;
  for (let i = -35; H0 + i * MM < w; i++) {
    const p = Math.round(H0 + i * MM), big = i % 10 === 0;
    h += `<path d="M${p + .5} ${big ? 9 : 13}V17" stroke="#000"/>`;
    if (big) h += `<text x="${p + 2}" y="9" fill="currentColor">${i}</text>`;
  }
  for (let i = -3; V0 + i * MM < t; i++) {
    const p = Math.round(V0 + i * MM), big = i % 10 === 0;
    v += `<path d="M${big ? 8 : 13} ${p + .5}H17" stroke="#000"/>`;
    if (big) String(i).split('').forEach((d, k) => v += `<text x="1" y="${p + 10 + k * 8}" fill="currentColor">${d}</text>`);
  }
  document.getElementById('hruler').innerHTML = h;
  document.getElementById('vruler').innerHTML = v;
}
drawRulers();
addEventListener('resize', drawRulers);
</script>
</body>
</html>
